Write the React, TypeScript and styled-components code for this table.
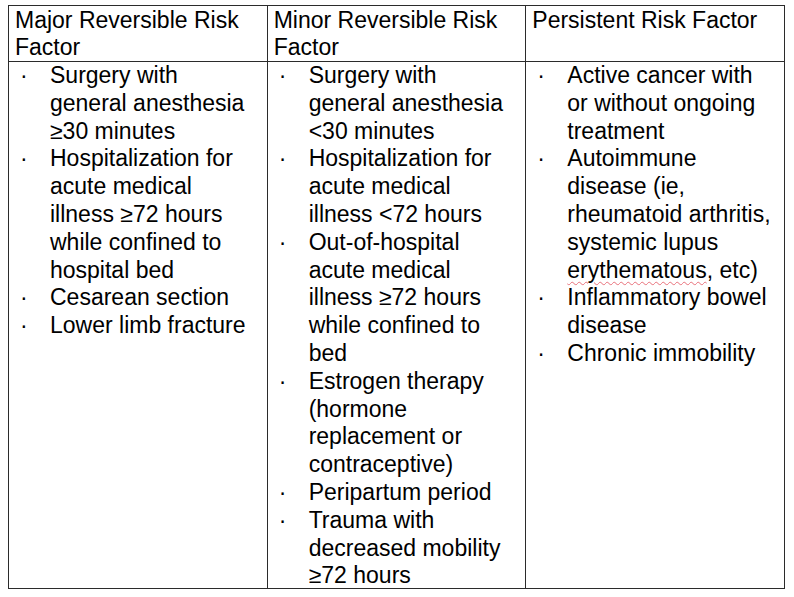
import React from 'react'
import styled, { createGlobalStyle } from 'styled-components'

const GlobalStyle = createGlobalStyle`
  body {
    margin: 0;
    background: #ffffff;
  }
`

const Page = styled.div`
  padding: 5px 0 0 8px;
  font-family: 'Liberation Sans', Arial, sans-serif;
  font-size: 23px;
  line-height: 27.8px;
  color: #000000;
`
const Table = styled.table`
  width: 777px;
  border-collapse: collapse;
  table-layout: fixed;
`
const HeadCell = styled.th`
  border: 1px solid #2b2b2b;
  padding: 1px 4px 0 6px;
  line-height: 27px;
  text-align: left;
  vertical-align: top;
  font-weight: normal;
`
const BodyCell = styled.td`
  border: 1px solid #2b2b2b;
  padding: 0 4px 0 11px;
  vertical-align: top;
`
const List = styled.div`
  display: flex;
  flex-direction: column;
  margin-bottom: -2px;
`
const ListItem = styled.div`
  display: flex;
  flex-direction: row;
`
const Bullet = styled.span`
  width: 30px;
  flex-shrink: 0;
`
const ItemText = styled.div`
  display: flex;
  flex-direction: column;
`
const Line = styled.div`
  white-space: nowrap;
`
const Misspelled = styled.span`
  text-decoration: underline wavy #e8707a;
  text-decoration-thickness: 1px;
  text-underline-offset: 3px;
`

type Column = { title: string[]; items: React.ReactNode[][] }

const columns: Column[] = [
  {
    title: ['Major Reversible Risk', 'Factor'],
    items: [
      ['Surgery with', 'general anesthesia', '≥30 minutes'],
      [
        'Hospitalization for',
        'acute medical',
        'illness ≥72 hours',
        'while confined to',
        'hospital bed',
      ],
      ['Cesarean section'],
      ['Lower limb fracture'],
    ],
  },
  {
    title: ['Minor Reversible Risk', 'Factor'],
    items: [
      ['Surgery with', 'general anesthesia', '<30 minutes'],
      ['Hospitalization for', 'acute medical', 'illness <72 hours'],
      [
        'Out-of-hospital',
        'acute medical',
        'illness ≥72 hours',
        'while confined to',
        'bed',
      ],
      ['Estrogen therapy', '(hormone', 'replacement or', 'contraceptive)'],
      ['Peripartum period'],
      ['Trauma with', 'decreased mobility', '≥72 hours'],
    ],
  },
  {
    title: ['Persistent Risk Factor'],
    items: [
      ['Active cancer with', 'or without ongoing', 'treatment'],
      [
        'Autoimmune',
        'disease (ie,',
        'rheumatoid arthritis,',
        'systemic lupus',
        <>
          <Misspelled>erythematous</Misspelled>, etc)
        </>,
      ],
      ['Inflammatory bowel', 'disease'],
      ['Chronic immobility'],
    ],
  },
]

const App = () => {
  return (
    <Page>
      <GlobalStyle />
      <Table>
        <thead>
          <tr>
            {columns.map((col, i) => (
              <HeadCell key={i}>
                {col.title.map((t, j) => (
                  <Line key={j}>{t}</Line>
                ))}
              </HeadCell>
            ))}
          </tr>
        </thead>
        <tbody>
          <tr>
            {columns.map((col, i) => (
              <BodyCell key={i}>
                <List>
                  {col.items.map((lines, j) => (
                    <ListItem key={j}>
                      <Bullet>·</Bullet>
                      <ItemText>
                        {lines.map((l, k) => (
                          <Line key={k}>{l}</Line>
                        ))}
                      </ItemText>
                    </ListItem>
                  ))}
                </List>
              </BodyCell>
            ))}
          </tr>
        </tbody>
      </Table>
    </Page>
  )
}

export default App
